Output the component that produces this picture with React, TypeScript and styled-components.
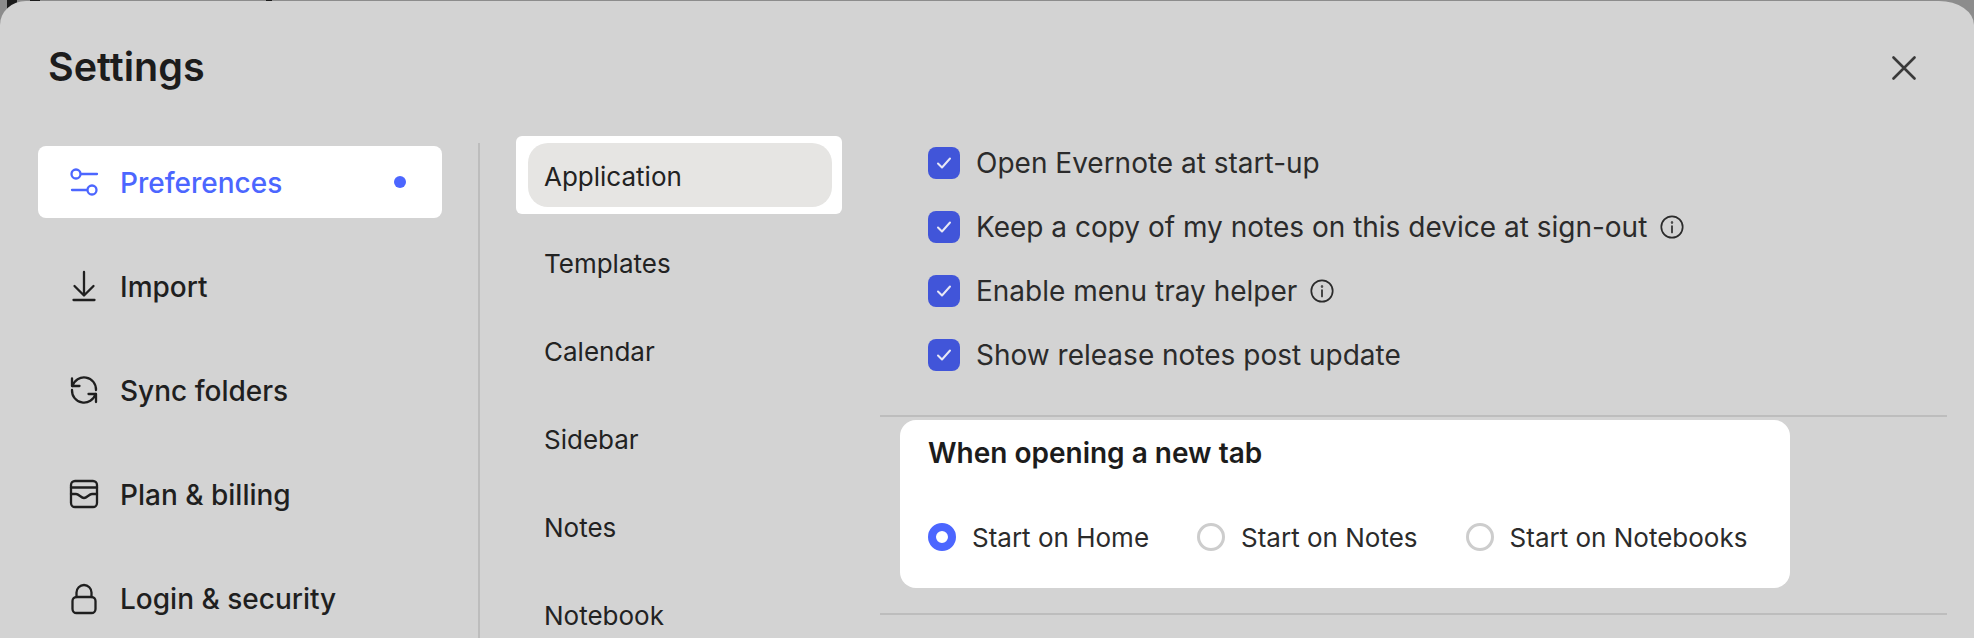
import React from "react";
import styled, { createGlobalStyle } from "styled-components";

const GlobalStyle = createGlobalStyle`
    html, body {
        margin: 0;
        padding: 0;
        overflow: hidden;
        background:
            linear-gradient(90deg, transparent 7px, #1c1c1c 7px, #1c1c1c 17px, transparent 17px) no-repeat 0 0 / 100% 10px,
            linear-gradient(90deg, transparent 30px, #1c1c1c 30px, #1c1c1c 40px, transparent 40px, transparent 266px, #1c1c1c 266px, #1c1c1c 272px, transparent 272px) no-repeat 0 0 / 100% 1px,
            #8c8c8c;
    }
`;

const Modal = styled.div`
    height: 637px;
    margin-top: 1px;
    background: #d3d3d3;
    border-radius: 26px 35px 0 0 / 24px 24px 0 0;
    overflow: hidden;
    font-family: Inter, "Liberation Sans", sans-serif;
    color: #1f1f1f;
`;

const Header = styled.header`
    height: 130px;
    padding: 0 58px 0 48px;
    display: flex;
    justify-content: space-between;
    align-items: flex-start;
`;

const Title = styled.h1`
    margin: 42px 0 0;
    font-size: 39.500px;
    line-height: 48px;
    font-weight: 600;
    color: #1c1c1c;
`;

const CloseButton = styled.svg`
    margin-top: 55px;
    color: #3a3a3a;
`;

const Body = styled.div`
    display: flex;
    align-items: flex-start;
    padding-left: 38px;
`;

const Nav = styled.nav`
    width: 404px;
    margin-top: 15px;
    display: flex;
    flex-direction: column;
    gap: 32px;
`;

const NavItem = styled.div<{ $active?: boolean }>`
    height: 72px;
    padding: 0 32px;
    display: flex;
    align-items: center;
    gap: 22px;
    border-radius: 8px;
    font-size: 28px;
    font-weight: 500;
    background: ${(p) => (p.$active ? "#fff" : "transparent")};
    color: ${(p) => (p.$active ? "#4c66ff" : "#1f1f1f")};
`;

const NavLabel = styled.span`
    flex: 1;
    padding-top: 2px;
`;

const NavDot = styled.span`
    width: 12px;
    height: 12px;
    margin-right: 4px;
    border-radius: 50%;
    background: #4c66ff;
`;

const Icon = styled.svg`
    flex: none;
    overflow: visible;
    fill: none;
    stroke: currentColor;
    stroke-width: 2.300;
    stroke-linecap: round;
    stroke-linejoin: round;
`;

const VerticalRule = styled.div`
    width: 2px;
    height: 520px;
    margin: 12px 0 0 36px;
    background: #bdbdbd;
`;

const SubNav = styled.div`
    width: 326px;
    margin: 5px 0 0 36px;
    display: flex;
    flex-direction: column;
`;

const Highlight = styled.div`
    height: 78px;
    box-sizing: border-box;
    padding: 7px 10px 7px 12px;
    margin-bottom: 17px;
    background: #fff;
    border-radius: 6px;
`;

const SubItem = styled.div<{ $active?: boolean }>`
    height: 64px;
    box-sizing: border-box;
    margin-bottom: ${(p) => (p.$active ? "0" : "24px")};
    padding-left: ${(p) => (p.$active ? "16px" : "28px")};
    padding-top: ${(p) => (p.$active ? "2px" : "0")};
    display: flex;
    align-items: center;
    border-radius: 20px;
    font-size: 26px;
    background: ${(p) => (p.$active ? "#e6e5e3" : "transparent")};
    color: #222;
`;

const Content = styled.div`
    width: 1067px;
    margin-left: 38px;
`;

const CheckList = styled.div`
    padding-left: 48px;
`;

const CheckRow = styled.div`
    height: 64px;
    display: flex;
    align-items: center;
    font-size: 28px;
    color: #2b2b2b;
`;

const CheckBox = styled.span`
    width: 32px;
    height: 32px;
    margin-right: 16px;
    display: flex;
    align-items: center;
    justify-content: center;
    border-radius: 8px;
    background: #4155d9;
    color: #e8e8f5;
`;

const InfoIcon = styled(Icon)`
    margin-left: 13px;
    stroke-width: 1.700;
`;

const Rule = styled.hr<{ $top: number }>`
    height: 2px;
    margin: ${(p) => p.$top}px 0 0;
    border: 0;
    background: #bdbdbd;
`;

const Card = styled.section`
    width: 890px;
    height: 168px;
    box-sizing: border-box;
    margin: 3px 0 0 20px;
    padding: 14px 0 0 28px;
    background: #fff;
    border-radius: 16px;
`;

const CardTitle = styled.h2`
    margin: 0;
    font-size: 28px;
    line-height: 38px;
    font-weight: 600;
    color: #1c1c1c;
`;

const RadioGroup = styled.div`
    margin-top: 45px;
    display: flex;
    gap: 48px;
`;

const RadioOption = styled.label`
    height: 40px;
    display: flex;
    align-items: center;
    gap: 16px;
    font-size: 26px;
    color: #2b2b2b;
`;

const Radio = styled.span<{ $checked?: boolean }>`
    width: 28px;
    height: 28px;
    box-sizing: border-box;
    border-radius: 50%;
    border: ${(p) => (p.$checked ? "8.5px solid #4c66ff" : "3px solid #cdcdcd")};
    background: #fff;
`;

const CheckMark = styled(Icon)`
    stroke-width: 2;
`;

const Check = () => (
    <CheckMark width="16" height="16" viewBox="0 0 16 16">
        <path d="M2 8.500l4 4 8-9" />
    </CheckMark>
);

const Info = () => (
    <InfoIcon width="24" height="24" viewBox="0 0 24 24">
        <circle cx="12" cy="12" r="10.700" />
        <path d="M12 11v6.500" />
        <circle cx="12" cy="7.400" r="0.400" />
    </InfoIcon>
);

const navItems = [
    {
        label: "Preferences",
        active: true,
        icon: (
            <>
                <circle cx="6" cy="6" r="4.500" />
                <path d="M11 6h16" />
                <circle cx="22" cy="22" r="4.500" />
                <path d="M2 22h15" />
            </>
        ),
    },
    {
        label: "Import",
        icon: <path d="M14 0v23M4.500 14l9.500 9.500 9.500-9.500M3.500 28h21" />,
    },
    {
        label: "Sync folders",
        icon: (
            <>
                <path d="M2.500 10A12 12 0 0 1 26 14" />
                <path d="M2 2.500V10h7.500" />
                <path d="M2 14a12 12 0 0 0 23.500 4" />
                <path d="M26 26v-8h-7.500" />
            </>
        ),
    },
    {
        label: "Plan & billing",
        icon: (
            <>
                <rect x="1" y="1" width="26" height="26" rx="4" />
                <path d="M1 7.500h26M1 14h5c3 0 5 4 8 4s5-4 8-4h5" />
            </>
        ),
    },
    {
        label: "Login & security",
        icon: (
            <>
                <rect x="2.500" y="13" width="23" height="16" rx="4" />
                <path d="M6.500 13V8.500a7.500 7.500 0 0 1 15 0V13" />
            </>
        ),
    },
];

const subItems = ["Templates", "Calendar", "Sidebar", "Notes", "Notebook"];

const checks = [
    { label: "Open Evernote at start-up" },
    { label: "Keep a copy of my notes on this device at sign-out", info: true },
    { label: "Enable menu tray helper", info: true },
    { label: "Show release notes post update" },
];

const radios = [
    { label: "Start on Home", checked: true },
    { label: "Start on Notes" },
    { label: "Start on Notebooks" },
];

const App = () => {
    return (
        <>
            <GlobalStyle />
            <Modal>
                <Header>
                    <Title>Settings</Title>
                    <CloseButton width="24" height="24" viewBox="0 0 24 24" fill="none" stroke="currentColor" strokeWidth="2.600" strokeLinecap="round">
                        <path d="M1.500 1.500l21 21M22.500 1.500l-21 21" />
                    </CloseButton>
                </Header>
                <Body>
                    <Nav>
                        {navItems.map((item) => (
                            <NavItem key={item.label} $active={item.active}>
                                <Icon width="28" height="28" viewBox="0 0 28 28">{item.icon}</Icon>
                                <NavLabel>{item.label}</NavLabel>
                                {item.active && <NavDot />}
                            </NavItem>
                        ))}
                    </Nav>
                    <VerticalRule />
                    <SubNav>
                        <Highlight>
                            <SubItem $active>Application</SubItem>
                        </Highlight>
                        {subItems.map((label) => (
                            <SubItem key={label}>{label}</SubItem>
                        ))}
                    </SubNav>
                    <Content>
                        <CheckList>
                            {checks.map((row) => (
                                <CheckRow key={row.label}>
                                    <CheckBox><Check /></CheckBox>
                                    {row.label}
                                    {row.info && <Info />}
                                </CheckRow>
                            ))}
                        </CheckList>
                        <Rule $top={28} />
                        <Card>
                            <CardTitle>When opening a new tab</CardTitle>
                            <RadioGroup>
                                {radios.map((radio) => (
                                    <RadioOption key={radio.label}>
                                        <Radio $checked={radio.checked} />
                                        {radio.label}
                                    </RadioOption>
                                ))}
                            </RadioGroup>
                        </Card>
                        <Rule $top={25} />
                    </Content>
                </Body>
            </Modal>
        </>
    );
};

export default App;
